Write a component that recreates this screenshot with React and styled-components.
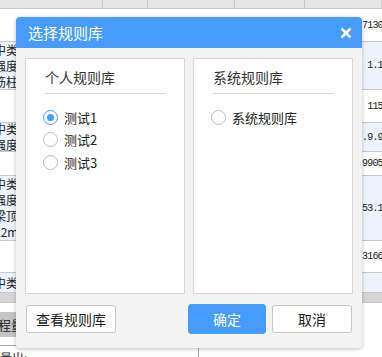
import React, { useState } from 'react';
import styled, { createGlobalStyle } from 'styled-components';

const GlobalStyle = createGlobalStyle`
  html, body {
    margin: 0;
    padding: 0;
    background: #fff;
    overflow: hidden;
  }
  body {
    font-family: "Noto Sans CJK SC", "Noto Sans", sans-serif;
  }
`;

const Page = styled.div`
  position: relative;
  width: 382px;
  height: 357px;
  overflow: hidden;
  background: #fff;
`;

/* ---------- background sheet ---------- */

const Sheet = styled.div`
  display: flex;
  flex-direction: column;
  width: 382px;
`;

const HeadRow = styled.div`
  display: grid;
  grid-template-columns: 103px 45px 87px 70px 77px;
  height: 8px;
  background: #e6e6e6;
  border-bottom: 1px solid #c8c8c8;

  div {
    border-right: 1px solid #c8c8c8;
  }
`;

const Row = styled.div`
  display: flex;
  justify-content: space-between;
  align-items: center;
  height: ${p => p.$h}px;
  background: ${p => (p.$alt ? '#edf3fd' : '#fff')};
  border-bottom: 1px solid #c8c8c8;
  box-sizing: border-box;
`;

const LeftCell = styled.div`
  width: 40px;
  margin-left: -6px;
  font-family: "Noto Sans CJK SC", sans-serif;
  font-size: 12px;
  line-height: 16px;
  color: #222;
  white-space: nowrap;
`;

const RightCell = styled.div`
  width: 20px;
  font-family: "Liberation Mono", monospace;
  font-size: 10px;
  letter-spacing: -0.8px;
  color: #222;
  white-space: pre;
  overflow: hidden;
`;

const ScrollBar = styled.div`
  height: 9px;
  background: #d6d6d6;
  border-bottom: 1px solid #c8c8c8;
`;

const Footer = styled.div`
  height: 42px;
  display: flex;
  align-items: center;
  border-bottom: 1px solid #a8a8a8;
  width: 198px;
`;

const Tag = styled.div`
  background: #c4c4c4;
  padding: 3px 6px 3px 0;
  margin-left: -2px;
  font-size: 13px;
  color: #222;
`;

const LastRow = styled.div`
  width: 198px;
  height: 20px;
  border-right: 1px solid #a8a8a8;
  font-size: 12px;
  padding-top: 3px;
  color: #222;
`;

/* ---------- dialog ---------- */

const Dialog = styled.div`
  position: absolute;
  left: 16px;
  top: 17px;
  width: 346px;
  height: 331px;
  background: #f3f3f3;
  border-radius: 4px;
  box-shadow: 0 1px 4px rgba(0, 0, 0, 0.25);
  display: flex;
  flex-direction: column;
  overflow: hidden;
`;

const Header = styled.div`
  height: 31px;
  background: #459cfd;
  display: flex;
  align-items: center;
  justify-content: space-between;
  padding: 0 10px 0 12px;
  color: #fff;
  font-size: 15px;
`;

const Close = styled.button`
  border: none;
  background: none;
  padding: 0;
  width: 12px;
  height: 12px;
  display: flex;
  cursor: pointer;
`;

const Body = styled.div`
  display: grid;
  grid-template-columns: 1fr 1fr;
  gap: 8px;
  padding: 10px 9px 0 9px;
`;

const Panel = styled.div`
  height: 236px;
  background: #fff;
  border: 1px solid #d8d8d8;
  box-sizing: border-box;
  padding: 0 19px;
`;

const PanelTitle = styled.div`
  font-size: 14px;
  color: #333;
  height: 34px;
  line-height: 36px;
  border-bottom: 1px solid #d8d8d8;
  margin-bottom: 12px;
`;

const Option = styled.label`
  display: flex;
  align-items: center;
  gap: 6px;
  height: 22.5px;
  font-size: 13px;
  color: #222;
  cursor: pointer;
  margin-left: -2px;
`;

const Circle = styled.span`
  width: 13px;
  height: 13px;
  border-radius: 50%;
  border: 1px solid ${p => (p.$on ? '#459cfd' : '#bdbdbd')};
  background: #fff;
  display: flex;
  align-items: center;
  justify-content: center;

  &::after {
    content: '';
    width: 7px;
    height: 7px;
    border-radius: 50%;
    background: ${p => (p.$on ? '#459cfd' : 'transparent')};
  }
`;

const Actions = styled.div`
  display: flex;
  align-items: center;
  padding: 10px 10px 0 10px;
`;

const Button = styled.button`
  height: ${p => (p.$primary ? 30 : 28)}px;
  width: ${p => p.$w}px;
  margin-left: ${p => p.$ml || 0}px;
  border: 1px solid ${p => (p.$primary ? '#459cfd' : '#c6c6c6')};
  border-radius: 3px;
  background: ${p => (p.$primary ? '#459cfd' : '#fff')};
  color: ${p => (p.$primary ? '#fff' : '#222')};
  font-family: "Noto Sans CJK SC", sans-serif;
  font-size: 14px;
  padding: 0;
  cursor: pointer;
`;

const rows = [
  { h: 33, right: '7130' },
  { h: 48, alt: true, left: ['中类', '强度', '筋柱'], right: ' 1.1' },
  { h: 33, right: ' 115' },
  { h: 29, alt: true, left: ['中类', '强度'], right: '.9.9' },
  { h: 24, right: '9905' },
  { h: 65, alt: true, left: ['中类', '强度', '梁顶', '22m'], right: '53.1' },
  { h: 32, right: '3166' },
  { h: 20, alt: true, left: ['中类'] },
];

const personal = ['测试1', '测试2', '测试3'];

const App = () => {
  const [picked, setPicked] = useState('测试1');

  return (
    <Page>
      <GlobalStyle />
      <Sheet>
        <HeadRow>
          <div /><div /><div /><div /><div />
        </HeadRow>
        {rows.map((r, i) => (
          <Row key={i} $h={r.h} $alt={r.alt}>
            <LeftCell>
              {(r.left || []).map(t => <div key={t}>{t}</div>)}
            </LeftCell>
            <RightCell>{r.right}</RightCell>
          </Row>
        ))}
        <ScrollBar />
        <Footer>
          <Tag>程量</Tag>
        </Footer>
        <LastRow>量出: ...</LastRow>
      </Sheet>

      <Dialog>
        <Header>
          <span>选择规则库</span>
          <Close aria-label="close">
            <svg width="12" height="12" viewBox="0 0 12 12">
              <path d="M1.5 1.5 L10.5 10.5 M10.5 1.5 L1.5 10.5" stroke="#fff" strokeWidth="2.6" />
            </svg>
          </Close>
        </Header>
        <Body>
          <Panel>
            <PanelTitle>个人规则库</PanelTitle>
            {personal.map(name => (
              <Option key={name} onClick={() => setPicked(name)}>
                <Circle $on={picked === name} />
                {name}
              </Option>
            ))}
          </Panel>
          <Panel>
            <PanelTitle>系统规则库</PanelTitle>
            <Option onClick={() => setPicked('系统规则库')}>
              <Circle $on={picked === '系统规则库'} />
              系统规则库
            </Option>
          </Panel>
        </Body>
        <Actions>
          <Button $w={90}>查看规则库</Button>
          <Button $primary $w={78} $ml={72}>确定</Button>
          <Button $w={80} $ml={6}>取消</Button>
        </Actions>
      </Dialog>
    </Page>
  );
};

export default App;
